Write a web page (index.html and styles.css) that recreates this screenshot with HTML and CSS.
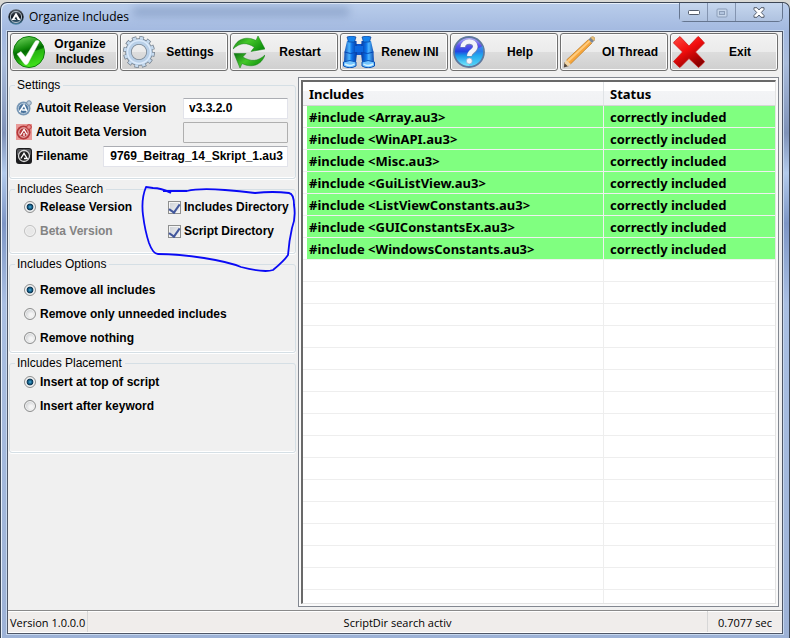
FILE: index.html
```html
<!DOCTYPE html>
<html lang="en">
<head>
<meta charset="utf-8">
<title>Organize Includes</title>
<link rel="stylesheet" href="styles.css">
</head>
<body>
<div class="window">
  <header class="titlebar">
    <svg class="app-icon" viewBox="0 0 16 16" aria-hidden="true">
      <defs><linearGradient id="orb" x2="0" y2="1"><stop offset="0" stop-color="#59616b"/><stop offset=".5" stop-color="#10161e"/><stop offset="1" stop-color="#4c86a8"/></linearGradient></defs>
      <circle cx="8" cy="8" r="7.7" fill="url(#orb)"/><circle cx="8" cy="8" r="5.6" fill="none" stroke="#aebac4" stroke-width="1"/>
      <path d="M3.5 11 8 3.5 12.5 11H9.8L8 7.6 6.4 10.2H8V11z" fill="#fff"/>
    </svg>
    <h1>Organize Includes</h1>
    <span class="glass" aria-hidden="true"></span>
    <div class="caption">
      <button class="cap" aria-label="Minimize"><svg width="12" height="6" viewBox="0 0 12 6"><rect x=".5" y=".5" width="11" height="4" rx="1" fill="#fff" stroke="#535c6b"/></svg></button>
      <button class="cap" aria-label="Maximize" disabled><svg width="12" height="10" viewBox="0 0 12 10"><rect x="1" y="1" width="10" height="8" rx="1" fill="#c7d6ea" stroke="#8b9db8"/><rect x="3.5" y="3.5" width="5" height="3" fill="#b3c5df" stroke="#8b9db8"/></svg></button>
      <button class="cap close" aria-label="Close"><svg width="12" height="11" viewBox="0 0 12 11"><path d="M1 .7h3L6 3 8 .7h3v1.8L8.3 5.5 11 8.500V10.300H8L6 8l-2 2.300H1V8.500L3.700 5.500 1 2.500z" fill="#fff" stroke="#535c6b"/></svg></button>
    </div>
  </header>
  <main class="client">
    <nav class="toolbar" aria-label="Tools">
      <button class="tool">
        <svg viewBox="0 0 32 32" aria-hidden="true"><defs><linearGradient id="g1" x2=".3" y2="1"><stop offset="0" stop-color="#7fe06a"/><stop offset=".45" stop-color="#118a0a"/><stop offset=".55" stop-color="#006a00"/><stop offset="1" stop-color="#4ae81f"/></linearGradient></defs><circle cx="16" cy="16" r="15.500" fill="url(#g1)" stroke="#0b7a0b"/><path d="M16 17 31 12c1 11-6 18-14 19z" fill="#35d317" opacity=".6"/><path d="M4 18 8 15.500 12.500 21 22 5.500c1-1.500 5-1 4 .7L15 27.500q-2 2.500-4 0z" fill="#fff" stroke="#d8f0d8" stroke-width=".5"/></svg>
        <span>Organize Includes</span></button>
      <button class="tool">
        <svg viewBox="0 0 32 32" aria-hidden="true"><circle cx="16" cy="16" r="13.500" fill="none" stroke="#76828f" stroke-width="5" stroke-dasharray="4.200 2.868"/><circle cx="16" cy="16" r="10.500" fill="none" stroke="#76828f" stroke-width="6.500"/><circle cx="16" cy="16" r="13" fill="none" stroke="#c6daee" stroke-width="4.400" stroke-dasharray="3 3.807" stroke-dashoffset="-.6"/><circle cx="16" cy="16" r="10.500" fill="none" stroke="#b9d0e8" stroke-width="5"/><circle cx="16" cy="16" r="11.500" fill="none" stroke="#dceafa" stroke-width="1.500"/></svg>
        <span>Settings</span></button>
      <button class="tool">
        <svg viewBox="0 0 32 32" aria-hidden="true"><defs><linearGradient id="g3" x2="1" y2=".6"><stop offset="0" stop-color="#0a7010"/><stop offset=".5" stop-color="#45c82a"/><stop offset="1" stop-color="#11930e"/></linearGradient></defs><g fill="url(#g3)" stroke="#117a12" stroke-width=".5"><path d="M0 13C4 2 14 0 23 4.500L25 0l7 13-14 2.500 3.300-4.200C14 6 7 6.500 0 13z"/><path d="M32 19C28 30 18 32 9 27.500L7 32 1 17.500l12 0-3.300 3.500C18 26 25 25.500 32 19z"/></g></svg>
        <span>Restart</span></button>
      <button class="tool">
        <svg viewBox="0 0 32 32" aria-hidden="true"><defs><linearGradient id="g4"><stop offset="0" stop-color="#0d47ae"/><stop offset=".4" stop-color="#4cb5ff"/><stop offset=".6" stop-color="#0b72ea"/><stop offset="1" stop-color="#073a9e"/></linearGradient></defs><rect x="12" y="8" width="8" height="11" fill="#0a55cc"/><g id="tube"><path d="M4 5 13.500 5 14 17 13 26 1 26 1.500 16z" fill="url(#g4)"/><path d="M4 1q4.500-2 9 0l-1.500 5h-6z" fill="#1683ee" stroke="#0a429c" stroke-width=".7"/><path d="M.5 26q6.500-3 12.500 0v4q-6 3.500-12.500 0z" fill="#72c4ff" stroke="#0a50b4"/><path d="M2 28q5 3 9.500 0" stroke="#d9f3ff" fill="none" stroke-width="1.500"/><path d="M1.500 16q6 3 12.500 0" stroke="#0748b5" fill="none"/></g><use href="#tube" transform="matrix(-1 0 0 1 32 0)"/><rect x="12" y="10" width="8" height="6" fill="#0c67df"/></svg>
        <span>Renew INI</span></button>
      <button class="tool">
        <svg viewBox="0 0 32 32" aria-hidden="true"><defs><linearGradient id="g5" x2="0" y2="1"><stop offset="0" stop-color="#c1bcff"/><stop offset=".28" stop-color="#5e55ee"/><stop offset=".48" stop-color="#2444e2"/><stop offset=".62" stop-color="#1596e8"/><stop offset="1" stop-color="#83f4ff"/></linearGradient></defs><circle cx="16" cy="16" r="15" fill="url(#g5)" stroke="#5e789e" stroke-width="1.800"/><path d="M15 17 30 10c2 12-4 19-14 20z" fill="#30bdf4" opacity=".5"/><path d="M9.800 11.500c0-7 12.500-7.500 12.500-.5 0 4.500-6 4.500-6 9.500" fill="none" stroke="#7288b0" stroke-width="5.500"/><path d="M9.800 11c0-7 12.500-7.500 12.500-.5 0 4.500-6 4.500-6 9.500" fill="none" stroke="#f4f4fa" stroke-width="4.500"/><circle cx="16.300" cy="25" r="2.900" fill="#f4f4fa" stroke="#8fa4c4" stroke-width=".6"/></svg>
        <span>Help</span></button>
      <button class="tool">
        <svg viewBox="0 0 32 32" aria-hidden="true"><path d="M1.500 26 6 30 .8 31.500z" fill="#54483c"/><path d="M3.500 24 7.500 28 5 30.500 1.300 27z" fill="#f1d5a6"/><path d="M3.500 24 25.500 3.500 29 7 7.500 28z" fill="#f6a63c"/><path d="M4.300 24.300 26.200 4.200 27.500 5.500 5.700 26z" fill="#ffcb7d"/><path d="M3.500 24 25.500 3.500M29 7 7.500 28" stroke="#b9771f" stroke-width=".7"/><path d="M25.500 3.500 27.500 1.500 31 5 29 7z" fill="#7b8694"/><path d="M27.500 1.500Q30-.5 31.500 1.500T31 5z" fill="#e6bf78" stroke="#a8854f" stroke-width=".5"/></svg>
        <span>OI Thread</span></button>
      <button class="tool">
        <svg viewBox="0 0 32 32" aria-hidden="true"><defs><linearGradient id="g6" x2=".6" y2="1"><stop offset="0" stop-color="#ff4a42"/><stop offset=".5" stop-color="#f20d0d"/><stop offset="1" stop-color="#8d0000"/></linearGradient></defs><path d="M7 .5 16 10 25 .5q1 0 6.500 6.500L22.500 16 31.500 25.500Q31 27 25.500 31.500L16 22.500 7 31.500Q5.500 31 .5 25.500L9.500 16 .5 7Q.7 5.500 7 .5z" fill="url(#g6)" stroke="#c91414" stroke-width=".7"/></svg>
        <span>Exit</span></button>
    </nav>
    <div class="body">
      <form class="side">
        <fieldset class="settings">
          <legend>Settings</legend>
          <div class="field">
            <svg viewBox="0 0 16 16" aria-hidden="true"><circle cx="7.500" cy="8.500" r="7" fill="#7897b5"/><circle cx="7.500" cy="8.500" r="5" fill="#48719b" stroke="#b8cbdc"/><path d="M3.500 12 8 5l3 6.500M6 10h4" stroke="#fff" stroke-width="1.500" fill="none"/><circle cx="13" cy="3" r="2.300" fill="#b9cbdc" stroke="#7890a8"/></svg>
            <label for="rel">Autoit Release Version</label><input id="rel" class="version" value="v3.3.2.0" readonly>
          </div>
          <div class="field">
            <svg viewBox="0 0 16 16" aria-hidden="true"><path fill="#e99a98" d="M0 0h16v16H0z"/><circle cx="7.500" cy="8.500" r="7" fill="#b5383a"/><circle cx="7.500" cy="8.500" r="4.700" fill="none" stroke="#f6cfcf"/><path d="M4.500 11 8 5.500l3 5M8 9v3" stroke="#fff" stroke-width="1.300" fill="none"/><circle cx="13" cy="3" r="2.300" fill="#e98c8c" stroke="#bb3a3a"/></svg>
            <label for="beta">Autoit Beta Version</label><input id="beta" class="version" disabled>
          </div>
          <div class="field">
            <svg viewBox="0 0 16 16" aria-hidden="true"><rect width="16" height="16" rx="3" fill="#1c1c1e"/><path d="M1 3q0-2 2-2h10q2 0 2 2v4Q8 3 1 7z" fill="#55565a"/><circle cx="8" cy="8" r="5.500" fill="#222" stroke="#d8d8d8" stroke-width="1.300"/><path d="M4.800 10.500 8 5.300l3.200 5.200H8" stroke="#fff" stroke-width="1.300" fill="none"/></svg>
            <label for="file">Filename</label><span class="file-box"><input id="file" class="file" value="9769_Beitrag_14_Skript_1.au3" readonly></span>
          </div>
        </fieldset>
        <fieldset class="search">
          <legend>Includes Search</legend>
          <div class="pair">
            <label><input type="radio" name="ver" checked>Release Version</label>
            <label><input type="checkbox" checked>Includes Directory</label>
            <label class="off"><input type="radio" name="ver" disabled>Beta Version</label>
            <label><input type="checkbox" checked>Script Directory</label>
          </div>
          <svg class="marker" viewBox="0 0 160 92" aria-hidden="true"><path d="M32 10Q22 5 14 5L7 4Q2 16 4 32T10 60Q14 71 19 71 40 71 65 75T102 84Q125 90 134 87 145 78 149 72 150 58 153 45 157 35 155 22 155 11 150 10 134 8 116 10 100 8 86 7 60 5 48 8L24 8" fill="none" stroke="#0a0af5" stroke-width="1.800" stroke-linejoin="round"/></svg>
        </fieldset>
        <fieldset class="options">
          <legend>Includes Options</legend>
          <label><input type="radio" name="opt" checked>Remove all includes</label>
          <label><input type="radio" name="opt">Remove only unneeded includes</label>
          <label><input type="radio" name="opt">Remove nothing</label>
        </fieldset>
        <fieldset class="placement">
          <legend>Inlcudes Placement</legend>
          <label><input type="radio" name="place" checked>Insert at top of script</label>
          <label><input type="radio" name="place">Insert after keyword</label>
        </fieldset>
      </form>
      <section class="list-frame">
        <div class="list">
          <table>
            <colgroup><col class="c1"><col></colgroup>
            <thead><tr><th>Includes</th><th>Status</th></tr></thead>
            <tbody>
              <tr><td>#include &lt;Array.au3&gt;</td><td>correctly included</td></tr>
              <tr><td>#include &lt;WinAPI.au3&gt;</td><td>correctly included</td></tr>
              <tr><td>#include &lt;Misc.au3&gt;</td><td>correctly included</td></tr>
              <tr><td>#include &lt;GuiListView.au3&gt;</td><td>correctly included</td></tr>
              <tr><td>#include &lt;ListViewConstants.au3&gt;</td><td>correctly included</td></tr>
              <tr><td>#include &lt;GUIConstantsEx.au3&gt;</td><td>correctly included</td></tr>
              <tr><td>#include &lt;WindowsConstants.au3&gt;</td><td>correctly included</td></tr>
            </tbody>
          </table>
        </div>
      </section>
    </div>
    <footer class="status"><span class="ver">Version 1.0.0.0</span><span class="msg">ScriptDir search activ</span><span class="time">0.7077 sec</span></footer>
  </main>
</div>
</body>
</html>
```
FILE: styles.css
```css
* { box-sizing: border-box; }
body {
  margin: 0;
  padding-top: 2px;
  height: 100vh;
  overflow: hidden;
  background: #d9d9d5;
  color: #000;
  font: bold 12px/24px "Liberation Sans", Arial, sans-serif;
}
button, input { font: inherit; color: inherit; margin: 0; }
.window {
  display: flex;
  flex-direction: column;
  height: 100%;
  padding: 0 6px 4px;
  border: 1px solid #3c4655;
  border-bottom: 0;
  border-radius: 7px 7px 0 0;
  box-shadow: inset 1px 1px 0 #e6effa;
  background: linear-gradient(#b9cdeb 0, #a3b9e0 28px, #a9bcdb 60px, #7f92b8 130px, #b3cbec 170px, #7d96c6 220px, #a9bfe2 300px, #9db2d6 100%);
}
.titlebar { display: flex; align-items: flex-start; height: 28px; flex: none; }
.app-icon { width: 16px; height: 16px; margin: 6px 5px 0 1px; }
h1 { margin: 2px 0 0; font: 12px/24px "Open Sans", "Noto Sans", sans-serif; }
.glass {
  width: 216px;
  height: 9px;
  margin: 4px 0 0 4px;
  background: #6f88b3;
  opacity: .5;
  filter: blur(4px);
}
.caption {
  display: flex;
  margin-left: auto;
  border: 1px solid #65758f;
  border-top: 0;
  border-radius: 0 0 5px 5px;
}
.cap {
  display: grid;
  place-items: center;
  width: 28px;
  height: 18px;
  padding: 1px 0 0;
  border: 0;
  border-right: 1px solid #8394b0;
  background: linear-gradient(#c6d7ee, #afc2e0);
}
.cap.close { width: 46px; border-right: 0; border-radius: 0 0 4px 0; }
.client {
  display: flex;
  flex-direction: column;
  flex: 1;
  min-height: 0;
  border: 1px solid #4e5666;
  background: #f0f0f0;
  box-shadow: 0 0 0 1px #c7d8ee;
}
.toolbar { display: grid; grid-template-columns: repeat(7, 1fr); gap: 2px; padding: 1px 4px 0 2px; flex: none; }
.tool {
  display: flex;
  align-items: center;
  height: 38px;
  padding: 0 2px;
  border: 1px solid #707070;
  border-radius: 3px;
  background: linear-gradient(#f2f2f2 0, #ebebeb 49%, #dddddd 50%, #cfcfcf 100%);
  box-shadow: inset 0 0 0 1px #fcfcfc;
  line-height: 15px;
}
.tool svg { width: 32px; height: 32px; flex: none; }
.tool span { flex: 1; padding: 0 4px; }
.body { display: flex; flex: 1; min-height: 0; gap: 2px; padding: 6px 3px 3px 1px; }
.side { display: flex; flex-direction: column; gap: 3px; width: 287px; padding-top: 1px; flex: none; }
fieldset {
  position: relative;
  min-width: 0;
  margin: 0;
  padding: 0 0 8px 14px;
  border: 1px solid #d5dfe5;
  border-radius: 3px;
  box-shadow: inset 0 -1px 0 #fff, 0 1px 0 #fff;
}
legend { margin-left: -9px; padding: 0 3px 0 2px; font-size: 12px; font-weight: normal; line-height: 14px; }
fieldset label { display: flex; align-items: center; }
.settings { padding: 4px 7px 10px 6px; }
.settings legend { margin-left: -1px; }
.search { padding-bottom: 10px; }
.field { display: flex; align-items: center; height: 24px; }
.field svg { width: 16px; height: 16px; margin-right: 4px; flex: none; }
.field input {
  height: 21px;
  min-width: 0;
  padding: 0 5px;
  border: 1px solid #e2e3ea;
  border-top-color: #abadb3;
  border-radius: 1px;
  background: #fff;
}
.field .version { width: 105px; margin-left: auto; }
.field input:disabled { background: #f0f0f0; border-color: #afafaf; }
.file-box { margin-left: auto; width: 185px; display: flex; }
.field .file { width: 100%; text-align: right; padding: 0 4px; }
input[type="radio"] {
  appearance: none;
  width: 12px;
  height: 12px;
  margin-right: 4px;
  border: 1px solid #8e8f8f;
  border-radius: 50%;
  background: radial-gradient(circle at 60% 60%, #f4f4f4 20%, #c6c9cc 80%);
  box-shadow: inset 0 0 0 1px #f4f4f4;
}
input[type="radio"]:checked { background: radial-gradient(circle, #58b4dc 0, #1b6f9b 20%, #0b2f4a 44%, #dfe3e6 52%); }
input[type="radio"]:disabled { border-color: #c0c0c0; background: #e8e8e8; }
input[type="checkbox"] {
  appearance: none;
  width: 13px;
  height: 13px;
  margin-right: 3px;
  border: 1px solid #8e8f8f;
  background: linear-gradient(135deg, #cbcfd5, #f6f6f6);
  box-shadow: inset 0 0 0 1px #f4f4f4;
  display: grid;
  place-items: center;
}
input[type="checkbox"]:checked::after {
  content: "";
  width: 5px;
  height: 9px;
  margin-bottom: 2px;
  border: solid #42579c;
  border-width: 0 2px 2px 0;
  transform: rotate(35deg);
}
.pair { display: grid; grid-template-columns: 144px 1fr; white-space: nowrap; margin-top: -1px; }
.off { color: #838383; }
.marker { position: absolute; left: 129px; top: -13px; width: 160px; height: 92px; z-index: 1; pointer-events: none; }
.options { padding-top: 7px; padding-bottom: 2px; }
.placement { padding-bottom: 34px; }
.list-frame { flex: 1; min-width: 0; display: flex; padding: 2px; border: 1px solid #828790; background: #fafafa; }
.list {
  flex: 1;
  min-width: 0;
  border: 2px solid #696969;
  border-width: 2px 1px 1px 2px;
  border-color: #696969 #e3e3e3 #e3e3e3 #696969;
  background:
    linear-gradient(#eee, #eee) 300px 0 / 1px 100% no-repeat,
    linear-gradient(#fff 21px, #eee 21px) 0 2px / 100% 22px;
}
table { width: 100%; table-layout: fixed; border-collapse: separate; border-spacing: 0; font: bold 13px/20px "Noto Sans", sans-serif; }
.c1 { width: 301px; }
th { height: 24px; padding: 0 6px; text-align: left; line-height: 22px; background: linear-gradient(#fff 40%, #f3f4f6 40%, #f1f2f4 95%); border-right: 1px solid #e0e3e6; border-bottom: 1px solid #d5d5d5; }
td { height: 22px; padding: 1px 6px 0; background: #80ff80; border-bottom: 1px solid #f0f0f0; border-right: 1px solid #f0f0f0; white-space: nowrap; }
td:first-child { background: linear-gradient(to right, #fff 4px, #80ff80 4px); }
td:last-child, th:last-child { border-right: 0; }
.status { display: flex; height: 23px; flex: none; border-top: 1px solid #8a8a8a; border-bottom: 1px solid #fff; background: #f0edeb; box-shadow: inset 0 1px 0 #fff; font: 11px/23px "Open Sans", "Noto Sans", sans-serif; white-space: nowrap; }
.ver { width: 80px; padding-left: 2px; border-right: 1px solid #d7d7d7; }
.msg { flex: 1; text-align: center; }
.time { width: 75px; text-align: center; border-left: 1px solid #d7d7d7; }
```
